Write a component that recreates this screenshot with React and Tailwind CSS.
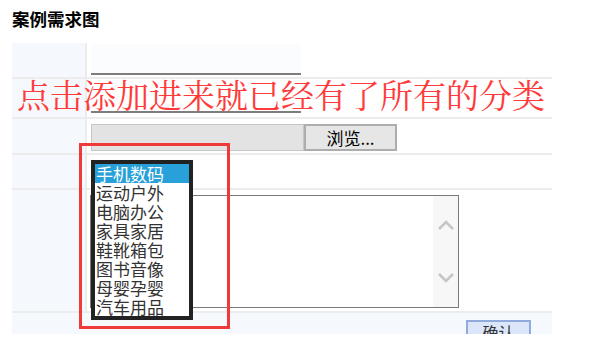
import React from "react";

const items = ["手机数码", "运动户外", "电脑办公", "家具家居", "鞋靴箱包", "图书音像", "母婴孕婴", "汽车用品"];

function Chevron({ up }) {
  return (
    <svg width="18" height="12" viewBox="0 0 18 12" className="block">
      <polyline
        points={up ? "2,10 9,3 16,10" : "2,2 9,9 16,2"}
        fill="none"
        stroke="#c6c6c6"
        strokeWidth="2.6"
      />
    </svg>
  );
}

function Row({ h, children, last }) {
  return (
    <div className={`flex ${last ? "" : "border-b-2 border-[#ececec]"}`} style={{ height: h }}>
      <div className="w-[75px] shrink-0 bg-[#f5f9fd] border-r-2 border-[#ececec]" />
      <div className="flex-1 min-w-0">{children}</div>
    </div>
  );
}

export default function App() {
  return (
    <div className="relative w-[609px] h-[354px] overflow-hidden bg-white font-['Noto_Sans_CJK_SC',sans-serif] text-[#222]">
      <div className="h-[43px] pl-[12px] pt-[10px]">
        <div className="text-[17.5px] leading-none font-bold text-black">案例需求图</div>
      </div>

      <div className="ml-[12px] w-[540px]">
        <Row h={36}>
          <div className="pl-[4px] pt-[1px]">
            <div className="w-[210px] h-[31px] bg-[#fbfcfe] border-b-2 border-[#7d7d7d]" />
          </div>
        </Row>
        <Row h={40}>
          <div className="pl-[4px] pt-[2px]">
            <div className="w-[210px] h-[32px] border-b-2 border-[#7d7d7d]" />
          </div>
        </Row>
        <Row h={36}>
          <div className="pl-[4px] pt-[5px] flex">
            <div className="w-[213px] h-[27px] bg-[#e3e3e3] border border-[#c6c6c6]" />
            <div className="w-[93px] h-[27px] bg-[#e6e6e6] border-2 border-[#adadad] flex items-center justify-center text-[17px] leading-none text-black">
              浏览...
            </div>
          </div>
        </Row>
        <Row h={35} />
        <Row h={123}>
          <div className="pl-[3px] pt-[5px]">
            <div className="w-[369px] h-[113px] border border-[#7a7a7a] bg-white flex justify-end">
              <div className="w-[25px] h-full bg-[#f7f7f7] flex flex-col items-center">
                <div className="mt-[23px]">
                  <Chevron up />
                </div>
                <div className="mt-[41px]">
                  <Chevron />
                </div>
              </div>
            </div>
          </div>
        </Row>
        <div className="h-[21px] bg-[#f5f9fd] overflow-hidden flex justify-end pr-[21px]">
          <div className="mt-[7px] w-[65px] h-[26px] shrink-0 bg-[#dbe6fa] border-2 border-[#91acdc] flex justify-center pt-[2px] text-[16px] leading-none text-[#333]">
            确认
          </div>
        </div>
      </div>

      <div className="absolute left-[17px] top-[77px] text-[33px] leading-none text-[#ff3b3b] whitespace-nowrap font-['Noto_Serif_CJK_SC','Noto_Sans_CJK_SC',serif]">
        点击添加进来就已经有了所有的分类
      </div>

      <div className="absolute left-[79px] top-[143px] w-[151px] h-[186px] border-[3px] border-[#f03a3a]" />

      <div className="absolute left-[91px] top-[160px] w-[102px] border-4 border-[#222] bg-white">
        {items.map((t, i) => (
          <div
            key={t}
            className={`h-[19px] pl-[1px] text-[17px] leading-[19px] whitespace-nowrap ${
              i === 0 ? "bg-[#28a0d9] text-white" : "text-[#333]"
            }`}
          >
            {t}
          </div>
        ))}
      </div>
    </div>
  );
}
